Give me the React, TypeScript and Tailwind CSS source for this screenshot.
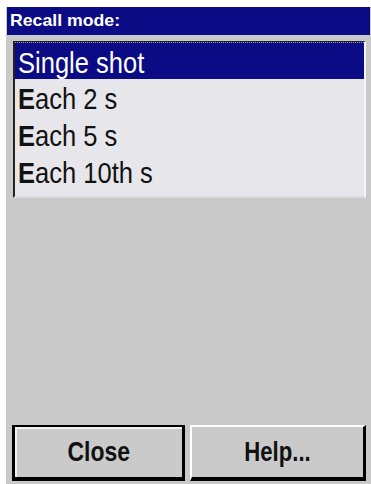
const items = ['Single shot', 'Each 2 s', 'Each 5 s', 'Each 10th s'];

export default function App() {
  const selected = 0;

  return (
    <div
      className="w-[371px] h-[484px] bg-white pt-[7px] pl-[6px] overflow-hidden"
      style={{ fontFamily: '"Liberation Sans", Arial, sans-serif' }}
    >
      <div className="h-[477px] bg-[#c9c9c9] flex flex-col">
        <div className="h-[28px] ml-[1px] mr-[1px] bg-[#0b0b85] text-white font-bold text-[17px] leading-[28px] pl-[3px]">
          <span className="inline-block origin-left scale-x-[1.04]">Recall mode:</span>
        </div>

        <div className="mt-[6px] ml-[7px] mr-[5px] h-[157px] bg-[#e7e7eb] border-l-[2px] border-t-[1px] border-[#222] border-r-2 border-r-[#f4f4f4] border-b-2 border-b-[#dcdcdc]">
          {items.map((label, i) => {
            const isSel = i === selected;
            return (
              <div
                key={label}
                className={`h-[37px] pt-[4px] leading-[33px] text-[29px] pl-[3px] whitespace-nowrap ${
                  isSel
                    ? 'bg-[#0b0b85] text-white border-t border-dotted border-[#9a9a9a]'
                    : 'text-[#111]'
                }`}
              >
                <span className="inline-block origin-left scale-x-[0.88]">
                  {isSel ? (
                    label
                  ) : (
                    <>
                      <b>{label[0]}</b>
                      {label.slice(1)}
                    </>
                  )}
                </span>
              </div>
            );
          })}
        </div>

        <div className="flex-1" />

        <div className="flex gap-[5px] ml-[6px] mr-[5px] mb-[3px]">
          <button className="w-[173px] h-[56px] bg-[#cacaca] border-t-2 border-l-[3px] border-r-[3px] border-b-[4px] border-black shadow-[inset_2px_2px_0_#f2f2f2] text-[#111] font-bold text-[27px]">
            <span className="inline-block scale-x-[0.85]">Close</span>
          </button>
          <button className="flex-1 h-[56px] bg-[#cacaca] border-t-2 border-l-2 border-white border-r-[3px] border-b-[4px] border-r-black border-b-black text-[#111] font-bold text-[27px]">
            <span className="inline-block scale-x-[0.82]">Help...</span>
          </button>
        </div>
      </div>
    </div>
  );
}
